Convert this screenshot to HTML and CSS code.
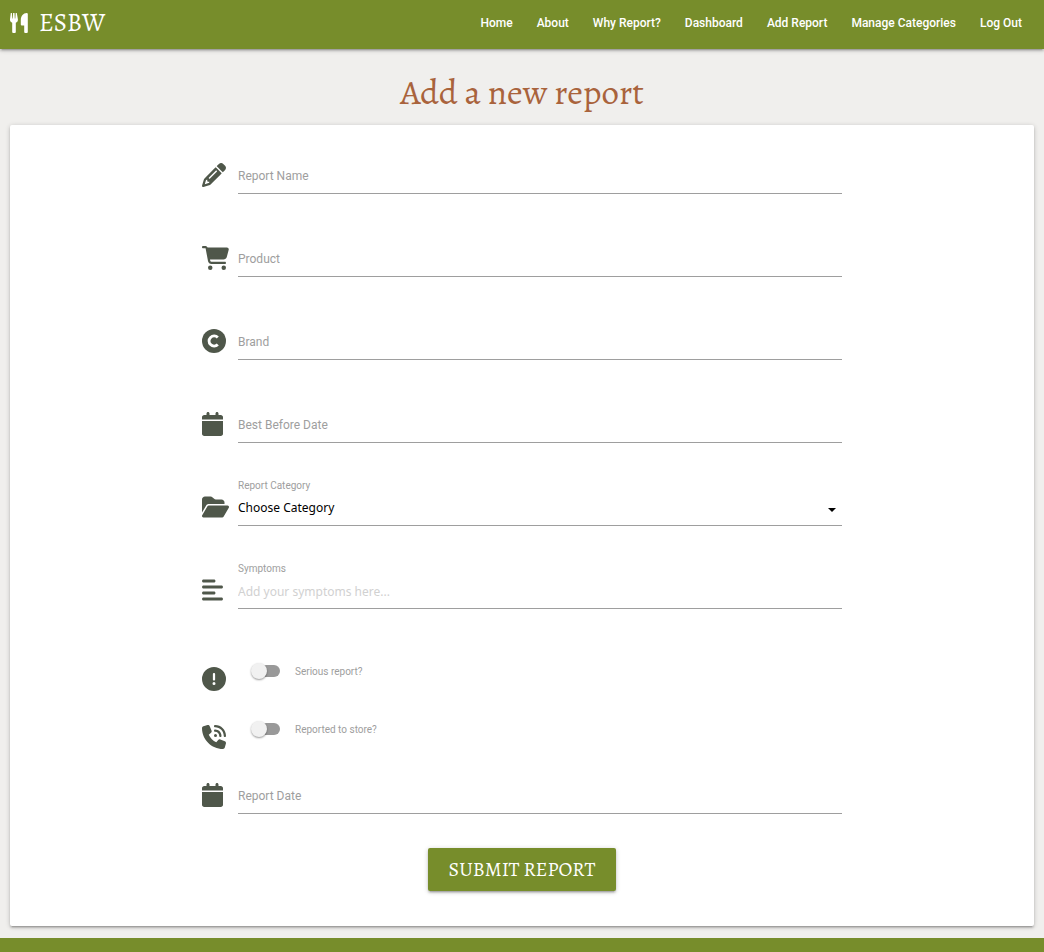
FILE: index.html
```html
<!DOCTYPE html>
<html lang="en">
<head>
<meta charset="utf-8">
<meta name="viewport" content="width=device-width, initial-scale=1">
<title>ESBW - Add a new report</title>
<link rel="stylesheet" href="styles.css">
</head>
<body>
<header class="site-header">
  <a class="brand" href="#">
    <svg class="brand-icon" viewBox="0 0 18 20" aria-hidden="true"><path d="M.8 0h1.100l.4 5.500h.5L3.100 0h1.400l.3 5.500h.5L5.700 0h1.100l1.100 6.200c.2 1.900-.7 3-2.100 3.500V19q0 1-1 1H3.200q-1 0-1-1V9.700C.8 9.200-.2 8.100 0 6.200zM16.700 0q1.100 0 1.100 1v18q0 1-1 1h-1.600q-1 0-1-1v-6.500h-2.400q-1 0-1-1V7c0-4 2.600-7 5.900-7z"/></svg>
    <span>ESBW</span>
  </a>
  <nav class="nav">
    <a href="#">Home</a>
    <a href="#">About</a>
    <a href="#">Why Report?</a>
    <a href="#">Dashboard</a>
    <a href="#">Add Report</a>
    <a href="#">Manage Categories</a>
    <a href="#">Log Out</a>
  </nav>
</header>
<main class="main">
  <h1 class="title">Add a new report</h1>
  <section class="card">
    <form class="form">
      <div class="rows">
        <div class="row">
          <svg class="icon" viewBox="0 0 512 512" aria-hidden="true"><path d="M410.300 231l11.300-11.300-33.900-33.900-62.100-62.100-33.900-33.900-11.300 11.300-22.600 22.600L58.600 322.900c-10.400 10.400-18 23.300-22.200 37.400L1 480.700c-2.500 8.400-.2 17.500 6.100 23.700s15.300 8.500 23.700 6.100l120.300-35.400c14.100-4.200 27-11.800 37.400-22.200L387.700 253.700zM160 399.400l-9.100 22.700c-4 3.100-8.500 5.400-13.300 6.900L59.400 452l23-78.100c1.400-4.900 3.800-9.400 6.900-13.300l22.700-9.100v32c0 8.800 7.200 16 16 16zM362.700 18.700l-14.400 14.500-22.600 22.600-11.400 11.300 33.900 33.900 62.100 62.100 33.900 33.900 11.300-11.300 22.600-22.600 14.500-14.500c25-25 25-65.500 0-90.500l-39.300-39.400c-25-25-65.500-25-90.500 0zm-47.400 168l-144 144c-6.200 6.200-16.400 6.200-22.600 0s-6.200-16.400 0-22.600l144-144c6.200-6.200 16.400-6.200 22.600 0s6.200 16.400 0 22.600z"/></svg>
          <div class="field floating">
            <label for="report-name">Report Name</label>
            <input id="report-name" type="text">
          </div>
        </div>
        <div class="row">
          <svg class="icon" viewBox="0 0 576 512" aria-hidden="true"><path d="M0 24C0 10.700 10.700 0 24 0h45.500c22 0 41.500 12.800 50.600 32h411c26.300 0 45.500 25 38.600 50.400l-41 152.300c-8.500 31.400-37 53.300-69.500 53.300H170.700l5.400 28.500c2.200 11.300 12.100 19.500 23.600 19.500H488c13.300 0 24 10.700 24 24s-10.700 24-24 24H199.700c-34.600 0-64.300-24.600-70.700-58.500L77.400 54.500c-.7-3.800-4-6.500-7.900-6.500H24C10.700 48 0 37.300 0 24zM128 464a48 48 0 1 1 96 0 48 48 0 1 1-96 0zm336-48a48 48 0 1 1 0 96 48 48 0 1 1 0-96z"/></svg>
          <div class="field floating">
            <label for="product">Product</label>
            <input id="product" type="text">
          </div>
        </div>
        <div class="row">
          <svg class="icon" viewBox="0 0 512 512" aria-hidden="true"><circle cx="256" cy="256" r="256"/><path class="cutout" d="M337 182a108 108 0 1 0 0 148"/></svg>
          <div class="field floating">
            <label for="brand">Brand</label>
            <input id="brand" type="text">
          </div>
        </div>
        <div class="row">
          <svg class="icon" viewBox="0 0 448 512" aria-hidden="true"><path d="M96 32v32H48C21.500 64 0 85.500 0 112v48h448v-48c0-26.500-21.500-48-48-48h-48V32c0-17.700-14.300-32-32-32s-32 14.300-32 32v32H160V32c0-17.700-14.300-32-32-32S96 14.300 96 32zM448 192H0v272c0 26.500 21.500 48 48 48h352c26.500 0 48-21.500 48-48z"/></svg>
          <div class="field floating">
            <label for="best-before">Best Before Date</label>
            <input id="best-before" type="text">
          </div>
        </div>
        <div class="row">
          <svg class="icon" viewBox="0 0 576 512" aria-hidden="true"><path d="M88.700 223.800L0 375.800V96c0-35.300 28.700-64 64-64h117.500c17 0 33.300 6.700 45.300 18.700l26.500 26.500c12 12 28.300 18.700 45.300 18.700H416c35.300 0 64 28.700 64 64v32H144c-22.800 0-43.800 12.100-55.300 31.800zm27.600 16.100C122.100 230 132.600 224 144 224h400c11.500 0 22 6.100 27.700 16.100s5.700 22.200-.1 32.100l-112 192C453.900 474 443.400 480 432 480H32c-11.500 0-22-6.100-27.700-16.100s-5.700-22.200.1-32.100z"/></svg>
          <div class="field">
            <label for="category">Report Category</label>
            <div class="select">
              <select id="category"><option>Choose Category</option></select>
              <svg class="caret" viewBox="0 0 8 4" aria-hidden="true"><path d="M0 0h8L4 4z"/></svg>
            </div>
          </div>
        </div>
        <div class="row">
          <svg class="icon" viewBox="0 0 448 512" aria-hidden="true"><path d="M288 64c0 17.700-14.300 32-32 32H32C14.300 96 0 81.700 0 64s14.300-32 32-32h224c17.700 0 32 14.300 32 32zm0 256c0 17.700-14.300 32-32 32H32c-17.700 0-32-14.300-32-32s14.300-32 32-32h224c17.700 0 32 14.300 32 32zM0 192c0-17.700 14.300-32 32-32h384c17.700 0 32 14.300 32 32s-14.300 32-32 32H32c-17.700 0-32-14.300-32-32zm448 256c0 17.700-14.300 32-32 32H32c-17.700 0-32-14.300-32-32s14.300-32 32-32h384c17.700 0 32 14.300 32 32z"/></svg>
          <div class="field">
            <label for="symptoms">Symptoms</label>
            <textarea id="symptoms" rows="1" placeholder="Add your symptoms here..."></textarea>
          </div>
        </div>
      </div>
      <div class="switches">
        <div class="row">
          <svg class="icon" viewBox="0 0 512 512" aria-hidden="true"><path d="M256 512a256 256 0 1 0 0-512 256 256 0 1 0 0 512zm0-384c13.300 0 24 10.700 24 24v112c0 13.300-10.700 24-24 24s-24-10.700-24-24V152c0-13.300 10.700-24 24-24zm-32 224a32 32 0 1 1 64 0 32 32 0 1 1-64 0z"/></svg>
          <label class="switch"><input type="checkbox"><span>Serious report?</span></label>
        </div>
        <div class="row">
          <svg class="icon" viewBox="0 0 512 512" aria-hidden="true"><path d="M280 0c128.100 0 232 103.900 232 232 0 13.300-10.700 24-24 24s-24-10.700-24-24c0-101.600-82.400-184-184-184-13.300 0-24-10.700-24-24s10.700-24 24-24zm8 192a32 32 0 1 1 0 64 32 32 0 1 1 0-64zm-32-72c0-13.300 10.700-24 24-24 75.100 0 136 60.900 136 136 0 13.300-10.700 24-24 24s-24-10.700-24-24c0-48.600-39.400-88-88-88-13.300 0-24-10.700-24-24zM117.500 1.400c19.400-5.300 39.700 4.600 47.400 23.200l40 96c6.800 16.300 2.100 35.200-11.600 46.300L144 207.300c33.300 70.400 90.300 127.400 160.700 160.700l40.300-49.300c11.200-13.700 30-18.400 46.300-11.600l96 40c18.600 7.700 28.500 28 23.200 47.400l-24 88C481.800 499.900 466 512 448 512 200.600 512 0 311.400 0 64 0 46 12.100 30.200 29.500 25.400z"/></svg>
          <label class="switch"><input type="checkbox"><span>Reported to store?</span></label>
        </div>
      </div>
      <div class="row">
        <svg class="icon" viewBox="0 0 448 512" aria-hidden="true"><path d="M96 32v32H48C21.500 64 0 85.500 0 112v48h448v-48c0-26.500-21.500-48-48-48h-48V32c0-17.700-14.300-32-32-32s-32 14.300-32 32v32H160V32c0-17.700-14.300-32-32-32S96 14.300 96 32zM448 192H0v272c0 26.500 21.500 48 48 48h352c26.500 0 48-21.500 48-48z"/></svg>
        <div class="field floating">
          <label for="report-date">Report Date</label>
          <input id="report-date" type="text">
        </div>
      </div>
      <button class="submit" type="submit">SUBMIT REPORT</button>
    </form>
  </section>
</main>
<footer class="site-footer"></footer>
</body>
</html>
```
FILE: styles.css
```css
:root {
  --green: #778d2b;
  --icon: #4f574a;
  --muted: #9e9e9e;
  --serif: "Alegreya", "Liberation Serif", serif;
  --shadow: 0 2px 2px 0 rgba(0, 0, 0, .14), 0 3px 1px -2px rgba(0, 0, 0, .12), 0 1px 5px 0 rgba(0, 0, 0, .2);
}

* { box-sizing: border-box; }

body {
  margin: 0;
  min-height: 100vh;
  display: flex;
  flex-direction: column;
  background: #f0efed;
  font-family: Roboto, sans-serif;
}

.site-header {
  display: flex;
  flex-wrap: wrap;
  align-items: flex-start;
  justify-content: space-between;
  min-height: 49px;
  padding: 0 10px;
  background: var(--green);
  box-shadow: var(--shadow);
}

.brand {
  display: flex;
  align-items: center;
  gap: 11px;
  color: #fff;
  font: 25px/46px var(--serif);
  text-decoration: none;
}

.brand-icon { width: 18px; height: 20px; fill: #fff; }

.nav { display: flex; flex-wrap: wrap; }

.nav a {
  padding: 0 12px;
  color: #fff;
  font-size: 12px;
  font-weight: 500;
  line-height: 46px;
  text-decoration: none;
}

.main { padding: 0 10px; }

.title {
  margin: 0;
  padding: 10px 0 0;
  color: #a9633c;
  font: 35px/66px var(--serif);
  text-align: center;
}

.card {
  padding: 11px 0 35px;
  background: #fff;
  border-radius: 2px;
  box-shadow: var(--shadow);
}

.form {
  display: flex;
  flex-direction: column;
  width: 62.5%;
  margin: 0 auto;
}

.rows { display: grid; gap: 25px; }

.switches { margin-top: 31px; }

.row {
  display: grid;
  grid-template-columns: 36px 1fr;
  align-items: end;
  min-height: 58px;
}

.icon {
  height: 24px;
  margin-bottom: 7px;
  justify-self: start;
  fill: var(--icon);
}

.cutout { fill: none; stroke: #fff; stroke-width: 60; }

.field { display: grid; }

.field label {
  color: var(--muted);
  font-size: 10px;
  line-height: 16px;
}

.floating > * { grid-area: 1 / 1; }

.field.floating label {
  align-self: center;
  padding-bottom: 4px;
  font-size: 12px;
  pointer-events: none;
  z-index: 1;
}

input[type="text"],
textarea,
select {
  display: block;
  width: 100%;
  height: 32px;
  margin: 0;
  padding: 0 0 4px;
  border: 0;
  border-bottom: 1px solid var(--muted);
  border-radius: 0;
  outline: 0;
  background: transparent;
  color: #000;
  font: 12px/20px "Noto Sans", sans-serif;
  appearance: none;
}

textarea {
  padding-top: 5px;
  resize: none;
  overflow: hidden;
}

textarea::placeholder { color: #d1d1d1; opacity: 1; }

.select { display: grid; align-items: center; }

.select > * { grid-area: 1 / 1; }

.caret {
  width: 8px;
  height: 4px;
  margin-right: 6px;
  justify-self: end;
  pointer-events: none;
}

.switch {
  display: flex;
  align-items: center;
  gap: 15px;
  height: 20px;
  margin-bottom: 17px;
  padding-left: 15px;
  color: var(--muted);
  font-size: 10px;
}

.switch input {
  position: relative;
  width: 27px;
  height: 12px;
  margin: 0;
  border-radius: 6px;
  background: #999;
  appearance: none;
}

.switch input::before {
  content: "";
  position: absolute;
  top: -2px;
  left: -2px;
  width: 16px;
  height: 16px;
  border-radius: 50%;
  background: #f1f1f1;
  box-shadow: 0 1px 2px rgba(0, 0, 0, .4);
}

.switch input:checked::before { left: 13px; }

.submit {
  align-self: center;
  height: 43px;
  margin-top: 34px;
  padding: 1px 21px 0;
  border: 0;
  border-radius: 2px;
  background: var(--green);
  box-shadow: var(--shadow);
  color: #fff;
  font: 20px/42px var(--serif);
}

.site-footer {
  flex: 1;
  min-height: 14px;
  margin-top: 12px;
  background: var(--green);
}
```
